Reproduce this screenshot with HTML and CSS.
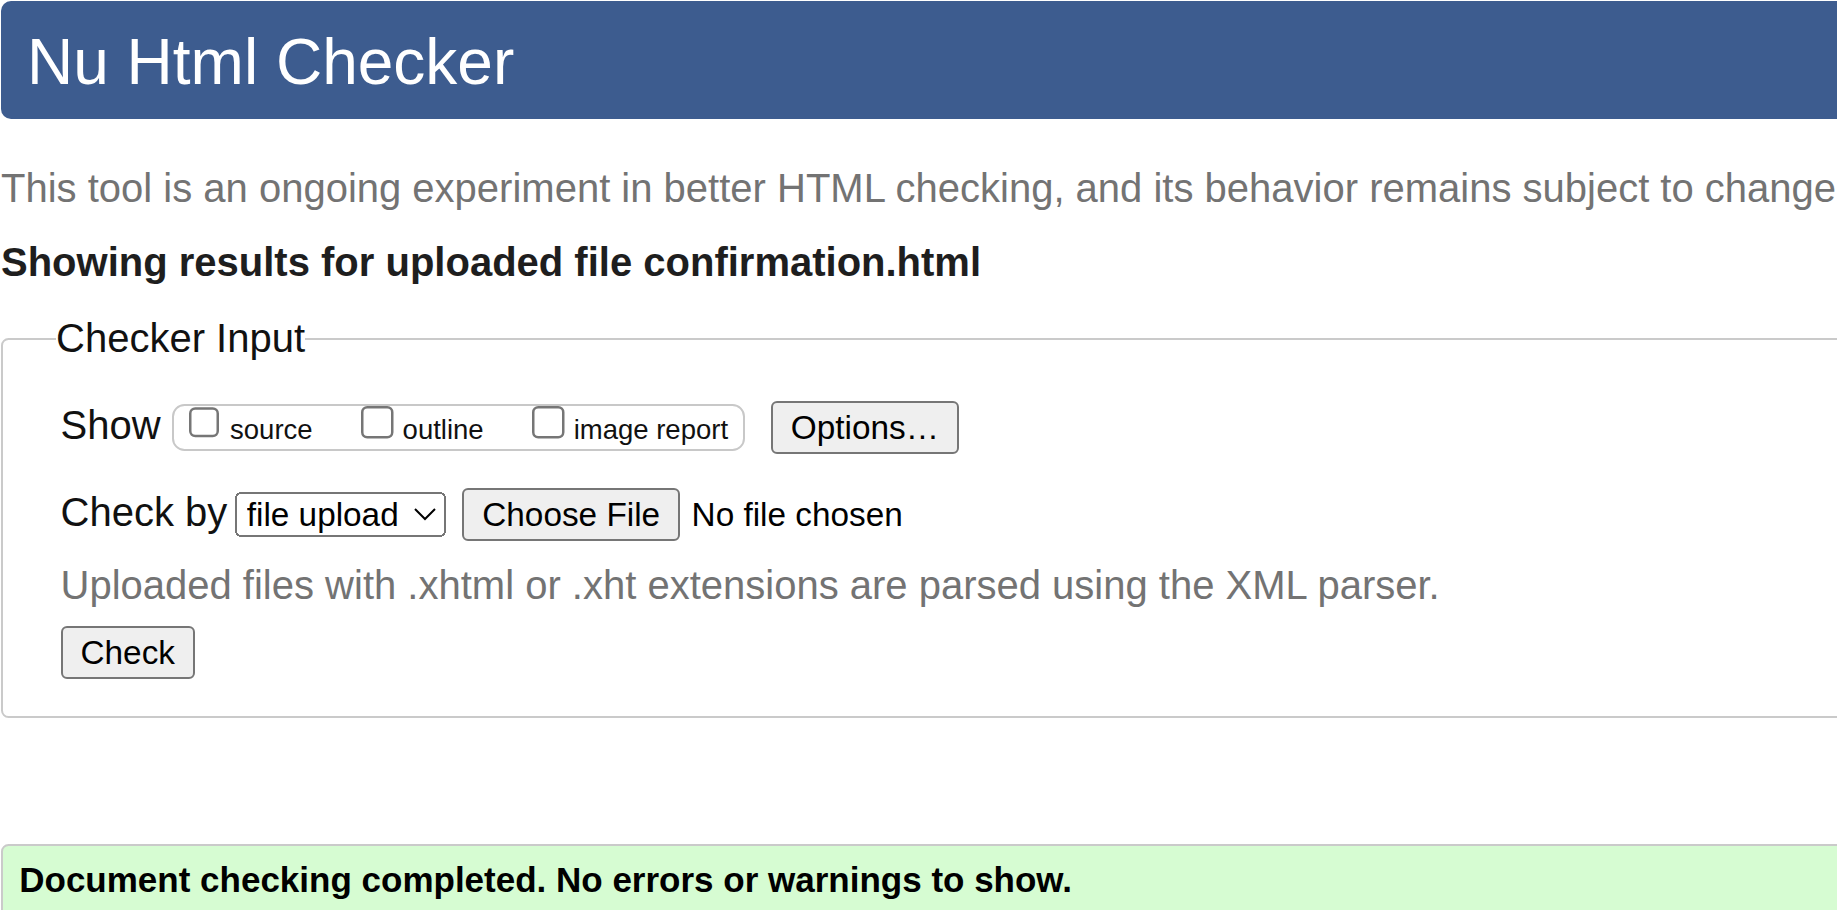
FILE: index.html
```html
<!DOCTYPE html>
<html lang="en">
<head>
<meta charset="utf-8">
<title>Showing results for uploaded file confirmation.html - Nu Html Checker</title>
<link rel="stylesheet" href="styles.css">
</head>
<body>
<div class="page">
  <h1 class="title">Nu Html Checker</h1>
  <p class="intro">This tool is an ongoing experiment in better HTML checking, and its behavior remains subject to change</p>
  <p class="subject"><strong>Showing results for uploaded file confirmation.html</strong></p>
  <form class="checker">
    <fieldset class="panel">
      <legend class="panel-legend">Checker Input</legend>
      <div class="row row-show">
        <span class="row-label">Show</span>
        <span class="show-group">
          <label class="opt"><input type="checkbox" class="cb">source</label>
          <label class="opt"><input type="checkbox" class="cb">outline</label>
          <label class="opt"><input type="checkbox" class="cb">image report</label>
        </span>
        <button type="button" class="btn btn-options">Options…</button>
      </div>
      <div class="row row-check">
        <span class="row-label">Check by</span>
        <select class="sel"><option>file upload</option></select>
        <button type="button" class="btn btn-file">Choose File</button>
        <span class="file-status">No file chosen</span>
      </div>
      <p class="hint">Uploaded files with .xhtml or .xht extensions are parsed using the XML parser.</p>
      <button type="submit" class="btn btn-check">Check</button>
    </fieldset>
  </form>
  <p class="success">Document checking completed. No errors or warnings to show.</p>
</div>
</body>
</html>
```

FILE: styles.css
```css
html {
  overflow: hidden;
  background: #fff;
}

body {
  margin: 0;
  zoom: 2.5;
  font-family: "Liberation Sans", Arial, sans-serif;
  font-size: 16px;
  color: #000;
}

.page {
  width: 790px;
  padding: 0.4px 0 0 0.4px;
}

.title {
  margin: 0;
  padding: 9.4px 10.4px 8px;
  background: #3d5c8f;
  color: #fff;
  font-size: 25.6px;
  font-weight: normal;
  line-height: normal;
  border-radius: 4px;
}

.intro {
  margin: 19.1px 0 0;
  color: #737373;
  white-space: nowrap;
}

.subject {
  margin: 11.4px 0 0;
  color: #1e1e1e;
}

.checker {
  margin: 12.6px 0 0;
}

.panel {
  margin: 0;
  min-width: 0;
  border: 1px solid #cacaca;
  border-radius: 3px;
  padding: 15.9px 0 14.9px 23px;
}

.panel-legend {
  padding: 0;
  margin-left: -1.8px;
  color: #111;
}

.row {
  display: flex;
  align-items: baseline;
  white-space: nowrap;
}

.row-label {
  color: #111;
}

.row-check {
  margin-top: 13.6px;
}

.show-group {
  display: inline-flex;
  align-items: baseline;
  margin-left: 4.6px;
  border: 1px solid #c8c8c8;
  border-radius: 5px;
  padding: 0 5.9px 1.5px 1.9px;
  font-size: 11px;
  color: #111;
}

.opt {
  display: inline-flex;
  align-items: baseline;
  margin-right: 15.5px;
}

.opt:last-child {
  margin-right: 0;
}

.cb {
  margin: 0 3.5px 0 4px;
}

.btn,
.sel {
  font-family: "Liberation Sans", Arial, sans-serif;
  font-size: 13.333px;
  color: #000;
}

.btn-options {
  margin-left: 10.4px;
}

.sel {
  width: 84.4px;
  margin-left: 3px;
}

.btn-file {
  margin-left: 6.6px;
}

.file-status {
  margin-left: 4.6px;
  font-size: 13.333px;
}

.hint {
  margin: 8.8px 0 0;
  color: #737373;
  white-space: nowrap;
}

.btn-check {
  margin-top: 7.2px;
}

.success {
  margin: 50.4px 0 0;
  background: #d6fcd2;
  border: 1px solid #cacaca;
  border-radius: 3px;
  padding: 5.3px 6px 8px 6.5px;
  font-weight: bold;
  font-size: 14px;
}
```
